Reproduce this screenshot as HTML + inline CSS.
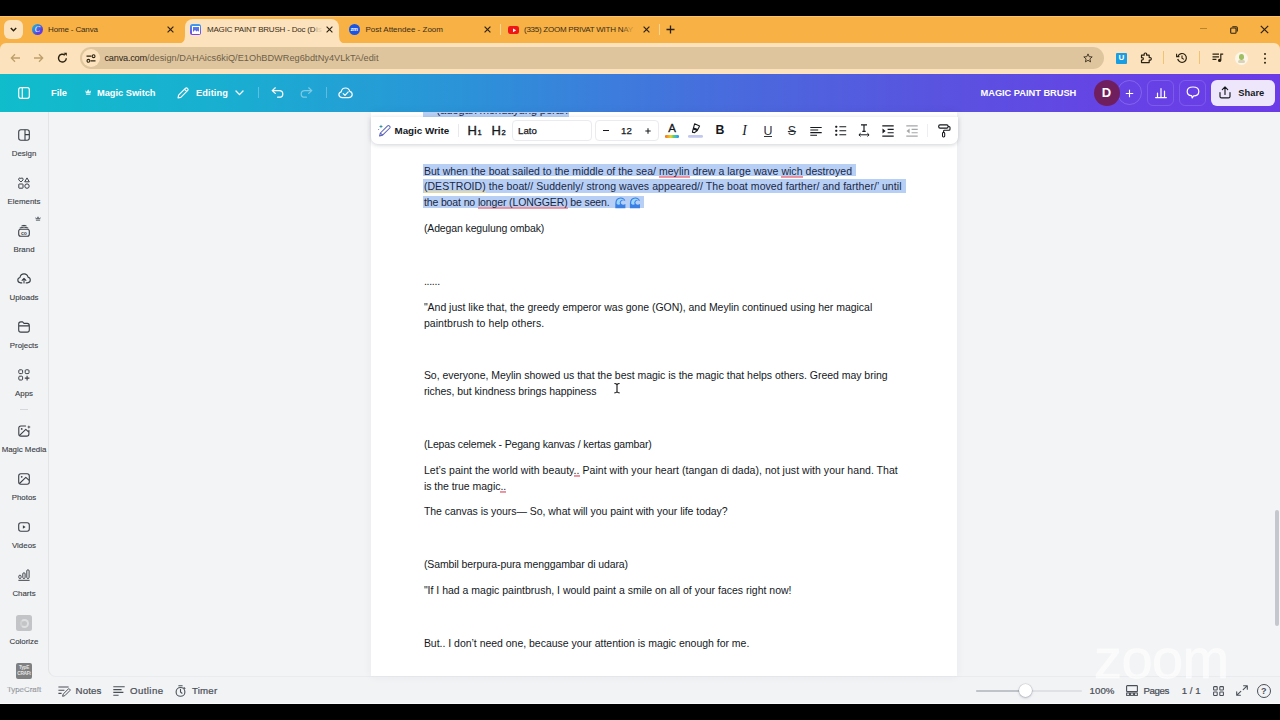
<!DOCTYPE html>
<html lang="en">
<head>
<meta charset="utf-8">
<title>MAGIC PAINT BRUSH - Doc</title>
<style>
*{box-sizing:border-box;margin:0;padding:0}
html,body{width:1280px;height:720px;overflow:hidden;background:#000}
body{position:relative;font-family:"Liberation Sans",sans-serif;color:#0e1318;-webkit-font-smoothing:antialiased}
.abs{position:absolute}
svg{position:absolute;overflow:visible}
/* browser chrome */
#tabstrip{left:0;top:16px;width:1280px;height:27px;background:#f7b145;border-top:1px solid #f9c46e}
#addr{left:0;top:43px;width:1280px;height:31px;background:#fce3bd;border-radius:6px 6px 0 0;box-shadow:0 -6px 0 #f7b145}
#acttab{left:185px;top:19px;width:154px;height:25px;background:#fce3bd;border-radius:8px 8px 0 0}
.tabt{position:absolute;top:23.5px;font-size:8px;line-height:12px;color:#3a2c17;white-space:nowrap}
.tabx{position:absolute;top:22px;font-size:10px;line-height:14px;color:#2b2110;font-weight:bold}
#urlpill{left:80px;top:47px;width:1024px;height:22px;border-radius:11px;background:#dfc59d}
#url{left:104.5px;top:51px;font-size:9.2px;line-height:14px;color:#6d5f49;white-space:nowrap}
#url b{font-weight:normal;color:#2c2416}
/* canva header */
#chead{left:0;top:74px;width:1280px;height:38px;background:linear-gradient(90deg,#10bdcb 0%,#19aed1 18%,#2b93d8 36%,#3d7cdc 48%,#4a69dd 58%,#5a52e0 74%,#6642e5 88%,#6b3be8 100%)}
.ht{position:absolute;top:86.5px;font-size:9.3px;line-height:13px;color:#fff;font-weight:bold;white-space:nowrap}
/* app */
#app{left:0;top:112px;width:1280px;height:592px;background:#f2f3f5}
#side{left:0;top:112px;width:48px;height:592px;background:#f2f3f5}
.sl{position:absolute;left:0;width:48px;text-align:center;font-size:7.9px;line-height:10px;color:#3a3f46;white-space:nowrap;margin-top:1px;-webkit-text-stroke:.12px #3a3f46}
#page{left:371px;top:112px;width:586px;height:563.6px;background:#fff;box-shadow:0 0 9px rgba(50,55,75,.06)}
#tbar{left:371px;top:117px;width:587px;height:27px;background:#fff;border-radius:0 0 7px 7px;box-shadow:0 1px 4px rgba(40,50,70,.22)}
.dl{position:absolute;left:423.9px;font-size:10.5px;line-height:16px;color:#14181d;white-space:nowrap}
.sel{position:absolute;background:#b7cff5}
#L0,#L1,#L2{color:#1a2744}
.dl u{text-decoration:none;background-repeat:repeat-x;background-position:0 100%;background-size:100% 1.9px;padding-bottom:1.2px}
.dl u.r{background-image:linear-gradient(#ec8f9d,#ec8f9d)}
.dl u.y{background-image:linear-gradient(#e6d9a0,#e6d9a0)}
.bt{position:absolute;font-size:9.7px;line-height:13px;color:#4a4f57;white-space:nowrap;-webkit-text-stroke:.22px #4a4f57}
</style>
</head>
<body>
<!-- ===== browser chrome ===== -->
<div class="abs" id="tabstrip"></div>
<div class="abs" id="addr"></div>
<div class="abs" id="acttab"></div>

<!-- tab strip content -->
<div class="abs" style="left:4px;top:20px;width:19px;height:19px;border-radius:6px;background:#fce3bd"></div>
<svg style="left:9px;top:26px" width="9" height="7" viewBox="0 0 9 7"><path d="M1.8 2 L4.5 4.7 L7.2 2" fill="none" stroke="#2b2110" stroke-width="1.5"/></svg>
<!-- tab1 -->
<div class="abs" style="left:32px;top:24px;width:11px;height:11px;border-radius:50%;background:linear-gradient(135deg,#18c4d0,#5a3fe0 70%,#7b2ff0)"></div>
<div class="abs" style="left:32px;top:24px;width:11px;height:11px;font-size:8px;line-height:11px;text-align:center;color:#fff;font-style:italic;font-family:'Liberation Serif',serif">C</div>
<div class="tabt" id="t1" style="left:48px;letter-spacing:-0.148px">Home - Canva</div>
<svg style="left:166.9px;top:26.3px" width="7" height="7" viewBox="0 0 7 7"><path d="M0.6 0.6 L6.4 6.4 M6.4 0.6 L0.6 6.4" stroke="#2b2110" stroke-width="1.15" fill="none"/></svg>
<!-- tab2 active -->
<div class="abs" style="left:190px;top:24px;width:11px;height:11px;border-radius:2.5px;background:linear-gradient(180deg,#3aa0ee,#7a3fe8)"></div>
<svg style="left:191.5px;top:25.5px" width="8" height="8" viewBox="0 0 8 8"><rect x="0.5" y="0.5" width="7" height="7" fill="none" stroke="#fff" stroke-width="1"/><path d="M1 6 L3 4 L4.5 5.5 L6 4.5 L7 6 V7 H1Z" fill="#fff"/></svg>
<div class="tabt" id="t2" style="left:207px;letter-spacing:-0.196px">MAGIC PAINT BRUSH - Doc (D</div><div class="tabt" id="t2b" style="left:316px"><span style="opacity:.4">i</span><span style="opacity:.15">s</span></div>
<svg style="left:325.9px;top:26.3px" width="7" height="7" viewBox="0 0 7 7"><path d="M0.6 0.6 L6.4 6.4 M6.4 0.6 L0.6 6.4" stroke="#2b2110" stroke-width="1.15" fill="none"/></svg>
<!-- tab3 -->
<div class="abs" style="left:348.5px;top:24px;width:11px;height:11px;border-radius:50%;background:#1a54e6"></div>
<div class="abs" style="left:348.5px;top:24px;width:11px;height:11px;font-size:5.5px;line-height:10.5px;text-align:center;color:#fff;font-weight:bold;letter-spacing:-0.2px">zm</div>
<div class="tabt" id="t3" style="left:365.5px;letter-spacing:0.006px">Post Attendee - Zoom</div>
<svg style="left:484.2px;top:26.3px" width="7" height="7" viewBox="0 0 7 7"><path d="M0.6 0.6 L6.4 6.4 M6.4 0.6 L0.6 6.4" stroke="#2b2110" stroke-width="1.15" fill="none"/></svg>
<!-- tab4 -->
<div class="abs" style="left:507.5px;top:26px;width:11.5px;height:8px;border-radius:2.2px;background:#f01616"></div>
<svg style="left:511.5px;top:27.8px" width="5" height="5" viewBox="0 0 5 5"><path d="M1 0.4 L4.2 2.3 L1 4.2Z" fill="#fff"/></svg>
<div class="tabt" id="t4" style="left:524px;letter-spacing:-0.255px">(335) ZOOM PRIVAT WITH N<span style="opacity:.55">A</span><span style="opacity:.25">Y</span></div>
<svg style="left:643.0px;top:26.3px" width="7" height="7" viewBox="0 0 7 7"><path d="M0.6 0.6 L6.4 6.4 M6.4 0.6 L0.6 6.4" stroke="#2b2110" stroke-width="1.15" fill="none"/></svg>
<div class="abs" style="left:659px;top:24px;width:1px;height:11px;background:#fbd492"></div>
<div class="abs" style="left:500px;top:24px;width:1px;height:11px;background:#fbd492"></div>
<svg style="left:666px;top:25px" width="9" height="9" viewBox="0 0 9 9"><path d="M4.5 0.5 V8.5 M0.5 4.5 H8.5" stroke="#2b2110" stroke-width="1.3" fill="none"/></svg>
<!-- window controls -->
<div class="abs" style="left:1200px;top:28px;width:7px;height:1.4px;background:#b98528"></div>
<svg style="left:1229.5px;top:25.5px" width="8" height="8" viewBox="0 0 9 9"><rect x="0.8" y="2.2" width="6" height="6" rx="1" fill="none" stroke="#2b2110" stroke-width="1.2"/><path d="M2.6 0.8 H7 Q8.2 0.8 8.2 2 V6.2" fill="none" stroke="#2b2110" stroke-width="1.2"/></svg>
<svg style="left:1260px;top:25px" width="9" height="9" viewBox="0 0 9 9"><path d="M0.8 0.8 L8.2 8.2 M8.2 0.8 L0.8 8.2" stroke="#2b2110" stroke-width="1.2" fill="none"/></svg>
<!-- address bar -->
<svg style="left:10px;top:53px" width="11" height="10" viewBox="0 0 11 10"><path d="M10 5 H1.5 M5 1.2 L1.3 5 L5 8.8" fill="none" stroke="#bfa06c" stroke-width="1.3"/></svg>
<svg style="left:33px;top:53px" width="11" height="10" viewBox="0 0 11 10"><path d="M1 5 H9.5 M6 1.2 L9.7 5 L6 8.8" fill="none" stroke="#bfa06c" stroke-width="1.3"/></svg>
<svg style="left:57px;top:52px" width="11" height="12" viewBox="0 0 11 12"><path d="M9.3 6.2 A3.9 3.9 0 1 1 7.9 3.1" fill="none" stroke="#2b2110" stroke-width="1.4"/><path d="M6.6 0.8 H9.8 V4 Z" fill="#2b2110"/></svg>
<div class="abs" id="urlpill"></div>
<div class="abs" style="left:82px;top:49px;width:18px;height:18px;border-radius:50%;background:#fce3bd"></div>
<svg style="left:86px;top:53.5px" width="10" height="9" viewBox="0 0 10 9"><path d="M0.5 2.2 H5.5 M4.5 6.8 H9.5" stroke="#2b2110" stroke-width="1.2" fill="none"/><circle cx="7.6" cy="2.2" r="1.4" fill="none" stroke="#2b2110" stroke-width="1.1"/><circle cx="2.4" cy="6.8" r="1.4" fill="none" stroke="#2b2110" stroke-width="1.1"/></svg>
<div class="abs" id="url" style="letter-spacing:0.020px"><b id="urlb" style="letter-spacing:-0.226px">canva.com</b>/design/DAHAics6kiQ/E1OhBDWReg6bdtNy4VLkTA/edit</div>
<svg style="left:1083px;top:53px" width="10" height="10" viewBox="0 0 10 10"><path d="M5 0.9 L6.2 3.7 L9.2 3.9 L6.9 5.9 L7.6 8.9 L5 7.3 L2.4 8.9 L3.1 5.9 L0.8 3.9 L3.8 3.7Z" fill="none" stroke="#3a2f1e" stroke-width="0.9" stroke-linejoin="round"/></svg>
<div class="abs" style="left:1116px;top:53px;width:11px;height:10.5px;border-radius:1px;background:#1b9de2"></div>
<div class="abs" style="left:1116px;top:53px;width:11px;height:10.5px;font-size:8px;line-height:10.5px;text-align:center;color:#fff;font-weight:bold">U</div>
<svg style="left:1140px;top:52px" width="12" height="12" viewBox="0 0 12 12"><path d="M1.5 3.2 H4.2 Q3.8 1 5.4 1 Q7 1 6.6 3.2 H9.2 V5.6 Q11.3 5.2 11.3 6.8 Q11.3 8.4 9.2 8 V10.6 H1.5 V8 Q3.3 8.2 3.3 6.8 Q3.3 5.4 1.5 5.6 Z" fill="none" stroke="#2b2110" stroke-width="1.2" stroke-linejoin="round"/></svg>
<div class="abs" style="left:1163px;top:51px;width:1px;height:13px;background:#f1c272"></div>
<svg style="left:1175.5px;top:52px" width="12" height="12" viewBox="0 0 12 12"><path d="M2 4 A4.4 4.4 0 1 1 1.7 7" fill="none" stroke="#2b2110" stroke-width="1.2"/><path d="M0.6 1.8 V4.6 H3.4" fill="none" stroke="#2b2110" stroke-width="1.1"/><path d="M6 3.5 V6.2 L8 7.4" fill="none" stroke="#2b2110" stroke-width="1.1"/></svg>
<div class="abs" style="left:1199px;top:51px;width:1px;height:13px;background:#f1c272"></div>
<svg style="left:1212px;top:53px" width="12" height="10" viewBox="0 0 12 10"><path d="M0.5 1.2 H7 M0.5 3.8 H7 M0.5 6.4 H4.4" stroke="#2b2110" stroke-width="1.2" fill="none"/><path d="M8.8 7.2 V1.2 H11.2" stroke="#2b2110" stroke-width="1.2" fill="none"/><circle cx="7.6" cy="7.4" r="1.6" fill="#2b2110"/></svg>
<div class="abs" style="left:1234.5px;top:51.5px;width:13px;height:13px;border-radius:50%;background:#fdf6e8"></div>
<div class="abs" style="left:1238.5px;top:54px;width:5px;height:6px;border-radius:50% 50% 40% 40%;background:#9fbf62"></div>
<div class="abs" style="left:1237.5px;top:60px;width:7px;height:2.5px;border-radius:2px;background:#d9d2b8"></div>
<div class="abs" style="left:1264px;top:52.5px;width:2.2px;height:2.2px;border-radius:50%;background:#2b2110;box-shadow:0 4.4px 0 #2b2110,0 8.8px 0 #2b2110"></div>
<svg style="left:177px;top:36px" width="8" height="8" viewBox="0 0 8 8"><path d="M8 0 V8 H0 Q8 8 8 0Z" fill="#fce3bd"/></svg>
<svg style="left:339px;top:36px" width="8" height="8" viewBox="0 0 8 8"><path d="M0 0 V8 H8 Q0 8 0 0Z" fill="#fce3bd"/></svg>
<div class="abs" id="chead"></div>

<!-- canva header content -->
<svg style="left:18px;top:87px" width="12" height="12" viewBox="0 0 12 12"><rect x="0.7" y="0.7" width="10.6" height="10.6" rx="2" fill="none" stroke="#fff" stroke-width="1.2"/><path d="M4.3 0.7 V11.3" stroke="#fff" stroke-width="1.2"/></svg>
<div class="ht" id="h1" style="left:51px;letter-spacing:-0.004px">File</div>
<svg style="left:84.8px;top:89.3px" width="6.4" height="6.4" viewBox="0 0 6 6"><path d="M0.2 1.2 L1.6 2.6 L3 0.3 L4.4 2.6 L5.8 1.2 L5.1 4.3 H0.9Z M0.9 4.9 H5.1 V5.6 H0.9Z" fill="#e6f6fb"/></svg>
<div class="ht" id="h2" style="left:97px;letter-spacing:-0.034px">Magic Switch</div>
<svg style="left:177px;top:86.5px" width="12" height="12" viewBox="0 0 12 12"><path d="M1 11 L1.6 8.2 L8.6 1.2 Q9.4 0.5 10.2 1.2 L10.8 1.8 Q11.5 2.6 10.8 3.4 L3.8 10.4 Z M7.6 2.3 L9.7 4.4" fill="none" stroke="#fff" stroke-width="1.15" stroke-linejoin="round"/></svg>
<div class="ht" id="h3" style="left:196px;letter-spacing:0.071px">Editing</div>
<svg style="left:234.5px;top:89.5px" width="9" height="6" viewBox="0 0 9 6"><path d="M1 1 L4.5 4.6 L8 1" fill="none" stroke="#fff" stroke-width="1.3" stroke-linecap="round" stroke-linejoin="round"/></svg>
<div class="abs" style="left:257.5px;top:87px;width:1px;height:11px;background:rgba(255,255,255,.28)"></div>
<svg style="left:271px;top:87px" width="13" height="11" viewBox="0 0 13 11"><path d="M4.3 0.8 L1.2 3.6 L4.3 6.4 M1.4 3.6 H8.2 Q11.8 3.6 11.8 6.9 Q11.8 10.2 8.2 10.2 H6.6" fill="none" stroke="#fff" stroke-width="1.25" stroke-linecap="round" stroke-linejoin="round"/></svg>
<svg style="left:299.5px;top:87px" width="13" height="11" viewBox="0 0 13 11" opacity=".42"><path d="M8.7 0.8 L11.8 3.6 L8.7 6.4 M11.6 3.6 H4.8 Q1.2 3.6 1.2 6.9 Q1.2 10.2 4.8 10.2 H6.4" fill="none" stroke="#fff" stroke-width="1.25" stroke-linecap="round" stroke-linejoin="round"/></svg>
<div class="abs" style="left:325.5px;top:87px;width:1px;height:11px;background:rgba(255,255,255,.28)"></div>
<svg style="left:337.5px;top:86.5px" width="15" height="12" viewBox="0 0 15 12"><path d="M4 10.6 Q0.9 10.4 0.9 7.6 Q0.9 5.3 3.2 4.8 Q3.9 1 7.6 1 Q10.9 1 11.8 4.4 Q14.2 5 14.2 7.6 Q14.2 10.4 11 10.6 Z" fill="none" stroke="#fff" stroke-width="1.2" stroke-linejoin="round"/><path d="M5.2 6.6 L7 8.3 L10.2 4.9" fill="none" stroke="#fff" stroke-width="1.2" stroke-linecap="round" stroke-linejoin="round"/></svg>
<!-- right -->
<div class="ht" id="h4" style="left:980.5px;top:87.2px;letter-spacing:-0.037px">MAGIC PAINT BRUSH</div>
<div class="abs" style="left:1116.5px;top:80px;width:25px;height:25px;border-radius:50%;border:1px solid rgba(255,255,255,.18)"></div>
<svg style="left:1124.5px;top:88.5px" width="9" height="9" viewBox="0 0 9 9"><path d="M4.5 0.8 V8.2 M0.8 4.5 H8.2" stroke="#fff" stroke-width="1.1" fill="none"/></svg>
<div class="abs" style="left:1093.5px;top:79.5px;width:26px;height:26px;border-radius:50%;background:#701f5e"></div>
<div class="abs" style="left:1093.5px;top:79.5px;width:26px;height:26px;text-align:center;font-size:13px;line-height:26px;color:#fff;font-weight:bold">D</div>
<div class="abs" style="left:1147px;top:79.5px;width:27px;height:26px;border-radius:6px;border:1px solid rgba(255,255,255,.14)"></div>
<svg style="left:1154.5px;top:86.5px" width="12" height="12" viewBox="0 0 12 12"><path d="M2.5 10.3 V6 M6 10.3 V1.5 M9.5 10.3 V4 M0.6 10.6 H11.4" stroke="#fff" stroke-width="1.2" fill="none" stroke-linecap="round"/></svg>
<div class="abs" style="left:1179px;top:79.5px;width:27px;height:26px;border-radius:6px;border:1px solid rgba(255,255,255,.14)"></div>
<svg style="left:1185.5px;top:86px" width="14" height="13" viewBox="0 0 14 13"><path d="M7 1 Q12.8 1 12.8 5.4 Q12.8 9.8 7.6 9.8 L6.2 11.9 L5.6 9.7 Q1.2 9.2 1.2 5.4 Q1.2 1 7 1Z" fill="none" stroke="#fff" stroke-width="1.2" stroke-linejoin="round"/></svg>
<div class="abs" style="left:1211px;top:79.5px;width:64px;height:26.5px;border-radius:6px;background:#eee7fc"></div>
<svg style="left:1218.5px;top:86px" width="12" height="13" viewBox="0 0 12 13"><path d="M6 8.4 V1.2 M3.3 3.6 L6 0.9 L8.7 3.6 M1 6.6 V10.4 Q1 11.9 2.5 11.9 H9.5 Q11 11.9 11 10.4 V6.6" fill="none" stroke="#15181d" stroke-width="1.15" stroke-linecap="round" stroke-linejoin="round"/></svg>
<div class="ht" id="h5" style="left:1238.2px;top:86.8px;color:#15181d;letter-spacing:0.054px">Share</div>
<div class="abs" id="app"></div>
<div class="abs" id="side"></div>

<!-- sidebar -->
<div class="abs" style="left:48px;top:112px;width:1232px;height:565px;background:#f3f4f6;border-left:1px solid #e2e4e8;border-bottom:1px solid #e9ebee;border-bottom-left-radius:8px"></div>
<svg style="left:18px;top:129px" width="12" height="12" viewBox="0 0 12 12"><rect x="0.7" y="0.7" width="10.6" height="10.6" rx="2.2" fill="none" stroke="#3a3f46" stroke-width="1.1"/><path d="M7 0.7 V11.3 M7 5.6 H11.3" stroke="#3a3f46" stroke-width="1.1" fill="none"/></svg>
<div class="sl" style="top:148px">Design</div>
<svg style="left:18px;top:177px" width="12" height="12" viewBox="0 0 12 12"><path d="M2.9 5 L0.9 3 Q0.3 2.1 0.9 1.4 Q1.8 0.5 2.9 1.5 Q4 0.5 4.9 1.4 Q5.5 2.1 4.9 3 Z" fill="none" stroke="#3a3f46" stroke-width="1"/><path d="M9 0.9 L11.3 4.8 H6.7Z" fill="none" stroke="#3a3f46" stroke-width="1" stroke-linejoin="round"/><rect x="0.8" y="7" width="4.2" height="4.2" rx="0.4" fill="none" stroke="#3a3f46" stroke-width="1"/><circle cx="9" cy="9.1" r="2.2" fill="none" stroke="#3a3f46" stroke-width="1"/></svg>
<div class="sl" style="top:196px">Elements</div>
<svg style="left:34.5px;top:216px" width="6" height="5" viewBox="0 0 6 5"><path d="M0.2 0.9 L1.6 2.2 L3 0.2 L4.4 2.2 L5.8 0.9 L5.1 3.6 H0.9Z M0.9 4.1 H5.1 V4.8 H0.9Z" fill="#6b7078"/></svg>
<svg style="left:18px;top:224px" width="12" height="13" viewBox="0 0 12 13"><rect x="0.7" y="5.2" width="10.6" height="7" rx="2" fill="none" stroke="#3a3f46" stroke-width="1.1"/><path d="M2 3.9 Q6 2 10 3.9 M3.8 1.8 Q6 0.7 8.2 1.8" fill="none" stroke="#3a3f46" stroke-width="1" stroke-linecap="round"/><text x="6" y="10.6" font-size="5" font-weight="bold" text-anchor="middle" fill="#3a3f46" font-family="Liberation Sans, sans-serif">co</text></svg>
<div class="sl" style="top:244px">Brand</div>
<svg style="left:17px;top:272.5px" width="14" height="11" viewBox="0 0 14 11"><path d="M4.8 9.9 H3.7 Q0.8 9.7 0.8 7.1 Q0.8 4.9 3 4.5 Q3.6 0.9 7.1 0.9 Q10.2 0.9 11 4.1 Q13.3 4.7 13.3 7.1 Q13.3 9.7 10.3 9.9 H9.2" fill="none" stroke="#3a3f46" stroke-width="1.1" stroke-linecap="round" stroke-linejoin="round"/><path d="M7 10 V5.6 M5.1 7.3 L7 5.4 L8.9 7.3" fill="none" stroke="#3a3f46" stroke-width="1.1" stroke-linecap="round" stroke-linejoin="round"/></svg>
<div class="sl" style="top:292px">Uploads</div>
<svg style="left:18px;top:320.5px" width="12" height="12" viewBox="0 0 12 12"><path d="M0.7 3 Q0.7 0.9 2.8 0.9 H4.6 L6 2.4 H9.2 Q11.3 2.4 11.3 4.5 V9 Q11.3 11.1 9.2 11.1 H2.8 Q0.7 11.1 0.7 9 Z M0.7 4.9 H11.3" fill="none" stroke="#3a3f46" stroke-width="1.1" stroke-linejoin="round"/></svg>
<div class="sl" style="top:340px">Projects</div>
<svg style="left:18px;top:368.5px" width="12" height="12" viewBox="0 0 12 12"><rect x="0.8" y="0.8" width="3.8" height="3.8" rx="0.9" fill="none" stroke="#3a3f46" stroke-width="1"/><rect x="7.2" y="0.8" width="3.8" height="3.8" rx="0.9" fill="none" stroke="#3a3f46" stroke-width="1"/><rect x="0.8" y="7.2" width="3.8" height="3.8" rx="0.9" fill="none" stroke="#3a3f46" stroke-width="1"/><path d="M9.1 6.8 V11.4 M6.8 9.1 H11.4" stroke="#3a3f46" stroke-width="1.1" fill="none"/></svg>
<div class="sl" style="top:388px">Apps</div>
<div class="abs" style="left:20px;top:409px;width:8px;height:1px;background:#d4d7dc"></div>
<svg style="left:18px;top:424.5px" width="13" height="12" viewBox="0 0 13 12"><path d="M7.6 1 H2.9 Q0.8 1 0.8 3.1 V9 Q0.8 11.1 2.9 11.1 H8.8 Q10.9 11.1 10.9 9 V5.2" fill="none" stroke="#3a3f46" stroke-width="1.1" stroke-linecap="round"/><circle cx="3.7" cy="3.9" r="0.9" fill="#3a3f46"/><path d="M1.6 10.4 L7.8 4.4 L10.8 7.2" fill="none" stroke="#3a3f46" stroke-width="1.1" stroke-linejoin="round"/><path d="M10.9 0.2 L11.4 1.6 L12.8 2.1 L11.4 2.6 L10.9 4 L10.4 2.6 L9 2.1 L10.4 1.6Z" fill="#3a3f46"/></svg>
<div class="sl" style="top:444px">Magic Media</div>
<svg style="left:18px;top:472.5px" width="12" height="12" viewBox="0 0 12 12"><rect x="0.7" y="0.7" width="10.6" height="10.6" rx="2.2" fill="none" stroke="#3a3f46" stroke-width="1.1"/><circle cx="3.7" cy="3.8" r="0.9" fill="#3a3f46"/><path d="M1.5 10.5 L7.8 4.4 L11.2 7.4" fill="none" stroke="#3a3f46" stroke-width="1.1" stroke-linejoin="round"/></svg>
<div class="sl" style="top:492px">Photos</div>
<svg style="left:18px;top:521.5px" width="12" height="10" viewBox="0 0 12 10"><rect x="0.7" y="0.7" width="10.6" height="8.6" rx="2.2" fill="none" stroke="#3a3f46" stroke-width="1.1"/><path d="M4.9 3.3 L7.6 5 L4.9 6.7Z" fill="#3a3f46"/></svg>
<div class="sl" style="top:540px">Videos</div>
<svg style="left:18px;top:568.5px" width="12" height="12" viewBox="0 0 12 12"><rect x="0.8" y="6.2" width="2.3" height="3.3" rx="1.1" fill="none" stroke="#3a3f46" stroke-width="0.95"/><rect x="4.8" y="3.8" width="2.3" height="5.7" rx="1.1" fill="none" stroke="#3a3f46" stroke-width="0.95"/><rect x="8.8" y="0.8" width="2.3" height="8.7" rx="1.1" fill="none" stroke="#3a3f46" stroke-width="0.95"/><path d="M0.4 11.3 H11.6" stroke="#3a3f46" stroke-width="1" fill="none"/></svg>
<div class="sl" style="top:588px">Charts</div>
<div class="abs" style="left:16px;top:615px;width:16px;height:16px;border-radius:2.5px;background:#c3c4c7"></div>
<div class="abs" style="left:19.5px;top:618.5px;width:9px;height:9px;border-radius:50%;border:2px solid #dedfe1;border-left-color:#cfd0d2"></div>
<div class="sl" style="top:636px">Colorize</div>
<div class="abs" style="left:16px;top:663px;width:16px;height:16px;border-radius:2px;background:#7f8082"></div>
<div class="abs" style="left:16px;top:664.5px;width:16px;text-align:center;font-size:4.7px;line-height:6px;font-weight:bold;color:#e4e4e4;letter-spacing:-0.25px">TypE<br>CRAFt</div>
<div class="sl" style="top:684px;color:#b4b7bc">TypeCraft</div>
<div class="abs" id="page"></div>

<!-- document text -->
<div class="sel" style="left:422.5px;top:164px;width:433.5px;height:12.4px"></div>
<div class="sel" style="left:422.5px;top:179.2px;width:483.5px;height:13.4px"></div>
<div class="sel" style="left:422.5px;top:195.6px;width:221.5px;height:12.2px"></div>
<svg style="left:614.5px;top:196.6px" width="26" height="12" viewBox="0 0 26 12"><g transform="translate(0 0)"><path d="M0.3 11.2 V6.2 Q0.5 0.9 5.6 0.6 Q9.6 0.7 10.4 4.2 Q8.6 2.8 6.8 3.7 Q4.9 5 6.3 6.9 Q8 8.3 10.4 7 V11.2Z" fill="#3b80e4"/><path d="M1.5 6.4 Q1.7 1.9 5.6 1.6 Q8.3 1.7 9.3 3.3 Q7.3 2.3 5.7 3.4 Q3.9 5 5.1 7.3 Q3 8.4 1.5 6.4Z" fill="#9ad6ff"/></g><g transform="translate(14.6 0)"><path d="M0.3 11.2 V6.2 Q0.5 0.9 5.6 0.6 Q9.6 0.7 10.4 4.2 Q8.6 2.8 6.8 3.7 Q4.9 5 6.3 6.9 Q8 8.3 10.4 7 V11.2Z" fill="#3b80e4"/><path d="M1.5 6.4 Q1.7 1.9 5.6 1.6 Q8.3 1.7 9.3 3.3 Q7.3 2.3 5.7 3.4 Q3.9 5 5.1 7.3 Q3 8.4 1.5 6.4Z" fill="#9ad6ff"/></g></svg>
<div class="dl" id="L0" style="top:163.2px;letter-spacing:0.042px">But when the boat sailed to the middle of the sea/ <u class="r">meylin</u> drew a large wave <u class="r">wich</u> destroyed</div>
<div class="dl" id="L1" style="top:178.0px;letter-spacing:0.067px"><u class="y">(DESTROID)</u> the boat// Suddenly/ strong waves appeared// The boat moved farther/ and farther/’ until</div>
<div class="dl" id="L2" style="top:193.6px;letter-spacing:-0.124px">the boat no <u class="r">longer (LONGGER)</u> be seen.</div>
<div class="dl" id="L3" style="top:219.7px;letter-spacing:-0.124px">(Adegan kegulung ombak)</div>
<div class="dl" id="L4" style="top:272.9px;letter-spacing:-0.268px">......</div>
<div class="dl" id="L5" style="top:299.0px;letter-spacing:-0.020px">"And just like that, the greedy emperor was gone (GON), and Meylin continued using her magical</div>
<div class="dl" id="L6" style="top:314.6px;letter-spacing:0.070px">paintbrush to help others.</div>
<div class="dl" id="L7" style="top:367.1px;letter-spacing:-0.027px">So, everyone, Meylin showed us that the best magic is the magic that helps others. Greed may bring</div>
<div class="dl" id="L8" style="top:382.8px;letter-spacing:-0.068px">riches, but kindness brings happiness</div>
<div class="dl" id="L9" style="top:435.7px;letter-spacing:-0.159px">(Lepas celemek - Pegang kanvas / kertas gambar)</div>
<div class="dl" id="L10" style="top:462.0px;letter-spacing:0.038px">Let’s paint the world with beauty<u class="r">..</u> Paint with your heart (tangan di dada), not just with your hand. That</div>
<div class="dl" id="L11" style="top:477.5px;letter-spacing:-0.031px">is the true magic<u class="r">..</u></div>
<div class="dl" id="L12" style="top:503.4px;letter-spacing:-0.041px">The canvas is yours— So, what will you paint with your life today?</div>
<div class="dl" id="L13" style="top:556.2px;letter-spacing:-0.104px">(Sambil berpura-pura menggambar di udara)</div>
<div class="dl" id="L14" style="top:581.8px;letter-spacing:-0.004px">"If I had a magic paintbrush, I would paint a smile on all of your faces right now!</div>
<div class="dl" id="L15" style="top:635.0px;letter-spacing:-0.021px">But.. I don’t need one, because your attention is magic enough for me.</div>
<div class="abs" style="left:422.5px;top:112px;width:146.5px;height:5.4px;background:#b7cff5;overflow:hidden"><div style="position:absolute;left:0;top:1.4px;width:146.5px;height:4px;overflow:hidden"><div style="position:absolute;left:14px;top:-11.2px;font-size:11.5px;line-height:16px;color:#1a2744;white-space:nowrap;letter-spacing:-0.3px">(adegan mendayung perahu)</div></div></div>
<svg style="left:613.5px;top:383px" width="6" height="10.4" viewBox="0 0 6 10.4"><path d="M0.4 0.5 Q2.2 0.5 3 1.6 Q3.8 0.5 5.6 0.5 M3 1.4 V9 M0.4 9.9 Q2.2 9.9 3 8.8 Q3.8 9.9 5.6 9.9" fill="none" stroke="#111" stroke-width="1.1"/></svg>
<div class="abs" id="tbar"></div>
<!-- floating toolbar content -->
<svg style="left:378px;top:124px" width="14" height="13" viewBox="0 0 14 13"><path d="M1.6 12 L2.4 9 L9.6 1.8 Q10.4 1.1 11.2 1.8 L11.8 2.4 Q12.5 3.2 11.8 4 L4.6 11.2 Z M2.4 9 L4.6 11.2" fill="none" stroke="#5b62b8" stroke-width="1.05" stroke-linejoin="round"/><path d="M3 0.4 L3.6 1.9 L5.1 2.5 L3.6 3.1 L3 4.6 L2.4 3.1 L0.9 2.5 L2.4 1.9Z" fill="#2f8f9a"/><circle cx="0.7" cy="5.6" r="0.5" fill="#5b62b8"/></svg>
<div class="abs" style="left:394.5px;top:124px;font-size:9.8px;line-height:13px;font-weight:bold;color:#15181d;white-space:nowrap">Magic Write</div>
<div class="abs" style="left:458.3px;top:123.5px;width:1px;height:13px;background:#e7e9ed"></div>
<div class="abs" style="left:467.5px;top:122px;font-size:13px;line-height:17px;color:#15181d;white-space:nowrap;-webkit-text-stroke:.35px #15181d">H<span style="font-size:7.5px;margin-left:.6px">1</span></div>
<div class="abs" style="left:491.5px;top:122px;font-size:13px;line-height:17px;color:#15181d;white-space:nowrap;-webkit-text-stroke:.35px #15181d">H<span style="font-size:7.5px;margin-left:.6px">2</span></div>
<div class="abs" style="left:512px;top:120px;width:80px;height:21px;border:1px solid #e9ebef;border-radius:4px"></div>
<div class="abs" style="left:518px;top:124.5px;font-size:9.7px;line-height:12px;color:#15181d;-webkit-text-stroke:.25px #15181d">Lato</div>
<div class="abs" style="left:595px;top:120px;width:64px;height:21px;border:1px solid #e9ebef;border-radius:4px"></div>
<div class="abs" style="left:603.3px;top:130px;width:5.4px;height:1.2px;background:#15181d"></div>
<div class="abs" style="left:615px;top:124.5px;width:23px;text-align:center;font-size:9.7px;line-height:12px;color:#15181d;-webkit-text-stroke:.25px #15181d">12</div>
<svg style="left:645px;top:127.6px" width="6" height="6" viewBox="0 0 7 7"><path d="M3.5 0.4 V6.6 M0.4 3.5 H6.6" stroke="#15181d" stroke-width="1.2" fill="none"/></svg>
<div class="abs" style="left:664px;top:120.9px;width:16px;text-align:center;font-size:11.5px;line-height:15px;color:#15181d;-webkit-text-stroke:.3px #15181d">A</div>
<div class="abs" style="left:664.8px;top:134.7px;width:14.2px;height:3px;border-radius:1.3px;background:linear-gradient(90deg,#ee6a2e,#f5a81e 22%,#e3d534 42%,#5fcf62 62%,#2fb4e4 82%,#2a8fe0)"></div>
<svg style="left:688.4px;top:122.8px" width="15" height="15" viewBox="0 0 15 15"><path d="M6.6 0.8 L11.6 2.9 L9.3 7.6 L5.2 6 Z M5.6 4.9 L9.8 6.6 M5.2 6 L4.4 8.9 L6.3 9.7 L9.3 7.6" fill="none" stroke="#15181d" stroke-width="1.05" stroke-linejoin="round"/><path d="M4.6 8.4 L4 9.8 L6 9.9Z" fill="#15181d"/><rect x="0" y="12" width="15" height="2.8" rx="1.2" fill="#c3c9ee"/></svg>
<div class="abs" style="left:712px;top:123px;width:16px;text-align:center;font-size:12.3px;line-height:15px;font-weight:bold;color:#15181d">B</div>
<div class="abs" style="left:736.4px;top:122.9px;width:16px;text-align:center;font-size:13.6px;line-height:15px;font-style:italic;color:#15181d;font-family:'Liberation Serif',serif">I</div>
<div class="abs" style="left:760px;top:123.7px;width:16px;text-align:center;font-size:12.4px;line-height:14px;color:#2d3138">U</div>
<div class="abs" style="left:763.6px;top:136.1px;width:8.8px;height:1.1px;background:#2d3138"></div>
<div class="abs" style="left:784px;top:123.7px;width:16px;text-align:center;font-size:12.4px;line-height:14px;color:#2d3138;text-decoration:line-through;text-decoration-thickness:1px">S</div>
<svg style="left:810px;top:125.5px" width="12" height="11" viewBox="0 0 12 11"><path d="M0.3 1.4 H11.7 M0.3 4 H8.2 M0.3 6.6 H11.7 M0.3 9.2 H7" stroke="#15181d" stroke-width="1.05" fill="none"/></svg>
<svg style="left:834.6px;top:125px" width="12" height="11" viewBox="0 0 12 11"><path d="M4.4 1.7 H11.2 M4.4 5.7 H11.2 M4.4 9.7 H11.2" stroke="#15181d" stroke-width="1.05" fill="none"/><rect x="0.3" y="0.8" width="1.9" height="1.9" rx="0.5" fill="#15181d"/><rect x="0.3" y="4.8" width="1.9" height="1.9" rx="0.5" fill="#15181d"/><rect x="0.3" y="8.8" width="1.9" height="1.9" rx="0.5" fill="#15181d"/></svg>
<svg style="left:858px;top:124px" width="12" height="13" viewBox="0 0 12 13"><path d="M3 0.9 H9 M6 0.9 V7.4 M4.3 7.4 H7.7" stroke="#15181d" stroke-width="1.15" fill="none"/><path d="M1 10.8 H11 M2.6 9.2 L0.9 10.8 L2.6 12.4 M9.4 9.2 L11.1 10.8 L9.4 12.4" stroke="#15181d" stroke-width="1" fill="none"/></svg>
<svg style="left:882px;top:124.5px" width="12" height="12" viewBox="0 0 12 12"><path d="M0.3 0.9 H11.7 M5.6 4.3 H11.7 M5.6 7.7 H11.7 M0.3 11.1 H11.7" stroke="#15181d" stroke-width="1.15" fill="none"/><path d="M0.5 3.6 L3.6 6 L0.5 8.4Z" fill="#15181d"/></svg>
<svg style="left:906px;top:124.5px" width="12" height="12" viewBox="0 0 12 12" opacity=".38"><path d="M0.3 0.9 H11.7 M5.6 4.3 H11.7 M5.6 7.7 H11.7 M0.3 11.1 H11.7" stroke="#15181d" stroke-width="1.15" fill="none"/><path d="M3.6 3.6 L0.5 6 L3.6 8.4Z" fill="#15181d"/></svg>
<div class="abs" style="left:927px;top:123.5px;width:1px;height:13px;background:#eceef1"></div>
<svg style="left:937.5px;top:123.5px" width="13" height="14" viewBox="0 0 13 14"><rect x="0.7" y="0.9" width="9.4" height="3.2" rx="1.3" fill="none" stroke="#15181d" stroke-width="1.15"/><path d="M10.1 2.5 H11 Q12 2.5 12 3.5 V5.2 Q12 6.2 11 6.2 H6.4 Q5.6 6.2 5.6 7 V8.4" fill="none" stroke="#15181d" stroke-width="1.1"/><rect x="4.5" y="8.4" width="2.2" height="4.6" rx="0.9" fill="none" stroke="#15181d" stroke-width="1.05"/></svg>


<!-- bottom bar -->
<svg style="left:58px;top:685.5px" width="13" height="11" viewBox="0 0 13 11"><path d="M0.4 1 H10.6 M0.4 4.2 H6.4 M0.4 7.4 H3.6" stroke="#4a4f57" stroke-width="1.1" fill="none"/><path d="M4.6 10.3 L5.2 8.1 L10.3 3 Q10.9 2.5 11.5 3 L11.9 3.4 Q12.4 4 11.9 4.6 L6.8 9.7 Z" fill="none" stroke="#4a4f57" stroke-width="1" stroke-linejoin="round"/></svg>
<div class="bt" id="b1" style="left:75.5px;top:684px;letter-spacing:0.138px">Notes</div>
<svg style="left:112.5px;top:686px" width="12" height="10" viewBox="0 0 12 10"><path d="M0.3 0.8 H11.7 M0.3 3.6 H8.6 M0.3 6.4 H10.4 M0.3 9.2 H5.6" stroke="#4a4f57" stroke-width="1.1" fill="none"/></svg>
<div class="bt" id="b2" style="left:130px;top:684px;letter-spacing:0.400px">Outline</div>
<svg style="left:174.5px;top:684.5px" width="11" height="12" viewBox="0 0 11 12"><circle cx="5.5" cy="6.9" r="4.4" fill="none" stroke="#4a4f57" stroke-width="1.1"/><path d="M3.8 0.7 H7.2 M5.5 4.4 V7 L7 8.2 M9 2.6 L9.9 3.5" stroke="#4a4f57" stroke-width="1.1" fill="none" stroke-linecap="round"/></svg>
<div class="bt" id="b3" style="left:192px;top:684px;letter-spacing:0.179px">Timer</div>
<div class="abs" style="left:975.5px;top:689.5px;width:106px;height:2px;border-radius:1px;background:#dfe1e5"></div>
<div class="abs" style="left:975.5px;top:689.5px;width:50px;height:2px;border-radius:1px;background:#bfc3ca"></div>
<div class="abs" style="left:1019px;top:684px;width:13px;height:13px;border-radius:50%;background:#fff;box-shadow:0 0 0 .6px rgba(60,70,90,.18),0 1px 2.5px rgba(40,50,70,.28)"></div>
<div class="bt" id="b4" style="left:1089.5px;top:684px;letter-spacing:0.055px">100%</div>
<svg style="left:1126px;top:685px" width="12" height="11" viewBox="0 0 12 11"><rect x="0.6" y="0.6" width="10.8" height="6" rx="0.7" fill="none" stroke="#4a4f57" stroke-width="1.1"/><rect x="0.6" y="8" width="2.9" height="2.4" fill="none" stroke="#4a4f57" stroke-width="1"/><rect x="4.55" y="8" width="2.9" height="2.4" fill="none" stroke="#4a4f57" stroke-width="1"/><rect x="8.5" y="8" width="2.9" height="2.4" fill="none" stroke="#4a4f57" stroke-width="1"/></svg>
<div class="bt" id="b5" style="left:1143.5px;top:684px;letter-spacing:-0.394px">Pages</div>
<div class="bt" id="b6" style="left:1181.7px;top:684px;letter-spacing:0.051px">1 / 1</div>
<svg style="left:1213px;top:685.5px" width="11" height="10" viewBox="0 0 11 10"><rect x="0.6" y="0.6" width="3.6" height="3.4" rx="0.5" fill="none" stroke="#4a4f57" stroke-width="1.05"/><rect x="6.8" y="0.6" width="3.6" height="3.4" rx="0.5" fill="none" stroke="#4a4f57" stroke-width="1.05"/><rect x="0.6" y="6" width="3.6" height="3.4" rx="0.5" fill="none" stroke="#4a4f57" stroke-width="1.05"/><rect x="6.8" y="6" width="3.6" height="3.4" rx="0.5" fill="none" stroke="#4a4f57" stroke-width="1.05"/></svg>
<svg style="left:1235.5px;top:685px" width="12" height="11" viewBox="0 0 12 11"><path d="M7.6 0.7 H11.3 V4.2 M11.1 0.9 L7.2 4.6 M4.4 10.3 H0.7 V6.8 M0.9 10.1 L4.8 6.4" fill="none" stroke="#4a4f57" stroke-width="1.1" stroke-linecap="round" stroke-linejoin="round"/></svg>
<div class="abs" style="left:1256.5px;top:683.5px;width:14.5px;height:14.5px;border-radius:50%;border:1.1px solid #4a4f57"></div>
<div class="abs" style="left:1256.5px;top:683.5px;width:14.5px;height:14.5px;text-align:center;font-size:9px;line-height:14.5px;font-weight:bold;color:#4a4f57">?</div>
<!-- scrollbar -->
<div class="abs" style="left:1274.5px;top:510px;width:4px;height:116px;border-radius:2px;background:#c4c7cd"></div>
<!-- watermark -->
<div class="abs" style="left:1094px;top:629px;font-size:56px;line-height:60px;letter-spacing:-0.6px;color:rgba(255,255,255,.62);-webkit-text-stroke:.9px rgba(255,255,255,.45);white-space:nowrap">zoom</div>
<div class="abs" style="left:0;top:703px;width:1280px;height:1px;background:#fafafb"></div>
<div class="abs" style="left:0;top:704px;width:1280px;height:16px;background:#000"></div>
</body>
</html>
